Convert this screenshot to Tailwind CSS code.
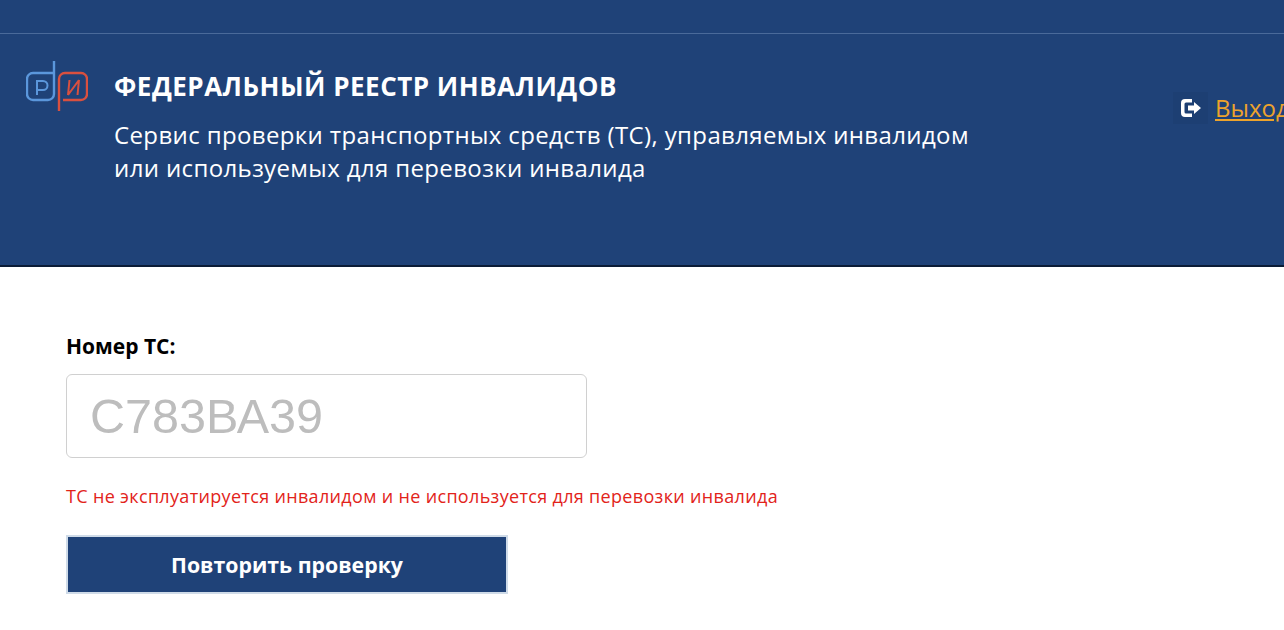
<!doctype html>
<html lang="ru">
  <head>
    <meta charset="utf-8">
    <title>Федеральный реестр инвалидов</title>
    <script src="https://cdn.jsdelivr.net/npm/@tailwindcss/browser@4"></script>
  </head>
  <body class="bg-white overflow-hidden font-['Open_Sans','Noto_Sans',sans-serif]">
    <header class="h-[267px] bg-[#1f4278] border-b-2 border-[#0b1c36] overflow-hidden">
      <div class="h-[34px] border-b border-[#4a6a9a]"></div>
      <div class="flex pl-[26px] pt-[26px] whitespace-nowrap">
        <svg class="w-[62px] h-[52px] shrink-0" viewBox="0 0 62 52" fill="none" stroke-width="2.400">
          <path d="M28 13H7a6 6 0 0 0-6 6v15a6 6 0 0 0 6 6h15a6 6 0 0 0 6-6V1" stroke="#5b97dc"/>
          <path d="M33 51V19a6 6 0 0 1 6-6h16a6 6 0 0 1 6 6v15a6 6 0 0 1-6 6H37" stroke="#d9503f"/>
          <path d="M11 35V21h6a4.500 4.500 0 0 1 0 9h-6" stroke="#5b97dc" stroke-width="2"/>
          <path d="M42 35l1.500-15M42 35l11-15M53 20l-1.500 15" stroke="#d9503f" stroke-width="2"/>
        </svg>
        <div class="ml-[26px]">
          <h1 class="mt-[8px] text-[26px] leading-[36px] font-bold tracking-[0.5px] text-white">ФЕДЕРАЛЬНЫЙ РЕЕСТР ИНВАЛИДОВ</h1>
          <p class="mt-[14px] text-[24px] leading-[33px] tracking-[0.37px] text-white">Сервис проверки транспортных средств (ТС), управляемых инвалидом<br>или используемых для перевозки инвалида</p>
        </div>
        <div class="ml-auto mt-[32px] flex items-center shrink-0 w-[111px] h-[32px]">
          <span class="w-[35px] h-[32px] bg-[#1d3f73] flex items-center justify-center shrink-0">
            <svg class="w-[20px] h-[18px]" viewBox="0 0 20 18" fill="#fff">
              <path d="M4 0h7v3.500H5a1.500 1.500 0 0 0-1.500 1.500v8A1.500 1.500 0 0 0 5 14.500h6V18H4a4 4 0 0 1-4-4V4a4 4 0 0 1 4-4z"/>
              <path d="M7 6.500h6V3l7 6-7 6v-3.500H7z"/>
            </svg>
          </span>
          <a href="#" class="ml-[7px] text-[24px] leading-[32px] text-[#eda32c] underline">Выход</a>
        </div>
      </div>
    </header>
    <main class="pl-[66px] pt-[66px]">
      <label class="block text-[21px] leading-[26px] font-bold text-black">Номер ТС:</label>
      <input class="block mt-[15px] w-[521px] h-[84px] px-[23px] border border-[#d0d0d0] rounded-md text-[48.500px] font-['Liberation_Sans',sans-serif] placeholder:text-[#bdbdbd] outline-none" placeholder="С783ВА39">
      <p class="mt-[27px] text-[18px] leading-[22px] tracking-[0.33px] text-[#e2231a]">ТС не эксплуатируется инвалидом и не используется для перевозки инвалида</p>
      <button class="block mt-[28px] w-[442px] h-[59px] bg-[#1f4278] border-2 border-[#cfdbe8] text-white text-[21.300px] font-bold">Повторить проверку</button>
    </main>
  </body>
</html>
